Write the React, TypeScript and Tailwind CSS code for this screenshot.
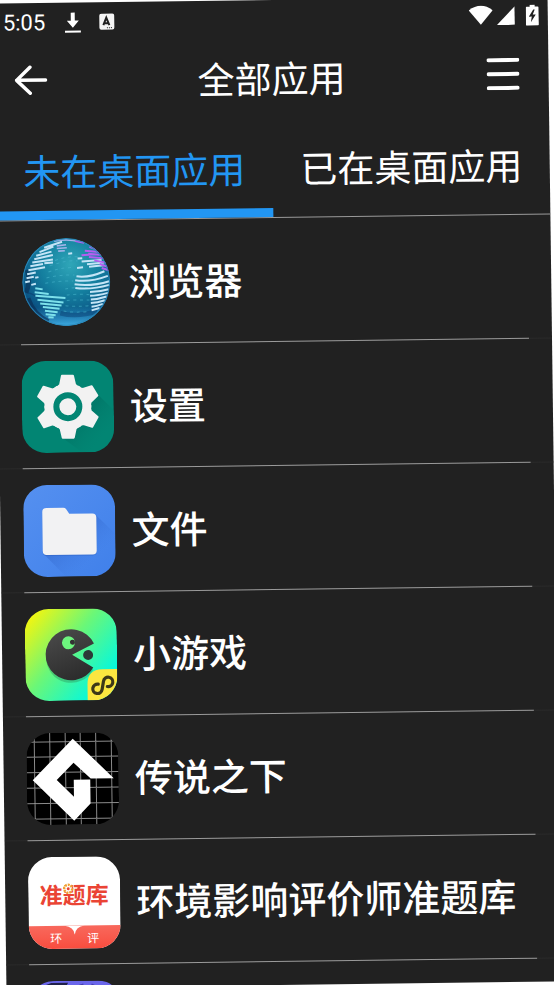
import React, { useState } from "react";
import clsx from "clsx";

const GlobeIcon: React.FC = () => (
  <svg viewBox="61 33 276 276" className="size-full" aria-hidden="true">
    <defs>
      <radialGradient id="globe-sea" cx="0.55" cy="0.3" r="0.75">
        <stop offset="0" stopColor="#2fa6b8" />
        <stop offset="0.45" stopColor="#147f9f" />
        <stop offset="0.8" stopColor="#0b5686" />
        <stop offset="1" stopColor="#0a3a66" />
      </radialGradient>
      <linearGradient id="globe-glow" x1="0" y1="0" x2="0" y2="1">
        <stop offset="0.78" stopColor="#2f9bd6" stopOpacity="0" />
        <stop offset="1" stopColor="#3fb0e8" />
      </linearGradient>
      <clipPath id="globe-clip">
        <circle cx="199" cy="169" r="132" />
      </clipPath>
    </defs>
    <g clipPath="url(#globe-clip)">
      <circle cx="199" cy="169" r="132" fill="url(#globe-sea)" />
      <circle cx="199" cy="169" r="132" fill="url(#globe-glow)" />
      <path d="M78 200q14-34 4-70M84 216q16 50 60 70" stroke="#0a2c52" strokeWidth="14" fill="none" opacity="0.6" />
      <path d="M84 200q34 6 60 60" stroke="#0d3f72" strokeWidth="4" fill="none" opacity="0.6" />
      <path d="M180 262q50 14 110-4" stroke="#0a3f74" strokeWidth="14" fill="none" opacity="0.5" />
      <g stroke="#48b4cc" strokeWidth="3" strokeDasharray="9 11" opacity="0.6" fill="none">
        <path d="M166 104q40-14 76-10M150 120q50-18 84-14M146 138q40-14 78-12M140 156q40-10 84-8M136 172q44-8 84-6M196 190q30-6 74-2M200 208q30-4 68 0M200 224q30-2 68 0M196 240q36 4 76 0M190 256q30 6 74 2" />
      </g>
      <g stroke="#c3e4f6" strokeWidth="6" fill="none">
        <path d="M134 65l54-17M120 78l42-16M110 89l46-12M104 99l56-12M98 109l62-8M92 120l38-6M134 112l26-2M86 132l50-8M82 144l26-5M80 156l22-4M76 168l14-3M106 155l10-2M94 176l14-3" />
        <path d="M230 152q36 6 84-14M226 164q46 7 98-12M224 176q50 8 104-8M226 187q46 7 102-8M270 200q26 0 56-8M270 211q22 0 54-8M272 222q22 0 48-8M272 233q20-1 42-8M274 244q14-1 34-8M274 255l24-7" />
        <path d="M232 127l18-2M268 124l44-4M234 99l14-1M246 108l60-4M262 116l52-4M206 84l12-1" />
      </g>
      <g stroke="#a3b4ea" strokeWidth="5" fill="none">
        <path d="M172 60l28-3M172 68l30-2M176 76l20-1M164 46q40-8 76 2" />
      </g>
      <g stroke="#7ce0ea" strokeWidth="6" fill="none">
        <path d="M106 186l22 4M104 198l42 6M106 209l90 8M112 221l78 9M120 232l64 7M128 243l50 6M134 254l38 5M136 265l30 3M144 274l16 1" />
      </g>
      <g stroke="#b45ef0" strokeWidth="6" fill="none">
        <path d="M228 46l26 6M246 89l30-2M256 76l44 4M266 85l42 4M268 95l50 5M284 105l38 8M300 116l28 10M306 128l24 8M270 64l20 8" />
      </g>
      <circle cx="199" cy="169" r="130" fill="none" stroke="#2a87b8" strokeWidth="4" opacity="0.8" />
    </g>
  </svg>
);

const SettingsIcon: React.FC = () => (
  <svg viewBox="0 0 92 92" className="size-full" aria-hidden="true">
    <defs>
      <linearGradient id="gear-shade" x1="0" y1="0" x2="1" y2="1">
        <stop offset="0.4" stopColor="#00695c" stopOpacity="0.4" />
        <stop offset="0.75" stopColor="#00796b" stopOpacity="0" />
      </linearGradient>
    </defs>
    <rect width="92" height="92" fill="#028573" />
    <path d="M77 35L92 50V92H60L40 77Z" fill="url(#gear-shade)" />
    <g fill="#f2f2f2" stroke="#f2f2f2" strokeWidth="2" strokeLinejoin="round">
      <circle cx="46" cy="46" r="22" />
      {[0, 60, 120, 180, 240, 300].map((angle) => (
        <path
          key={angle}
          d="M40.500 15H51.500L53.500 24Q55 26 58 27L46 46L34 27Q37 26 38.500 24Z"
          transform={`rotate(${angle} 46 46)`}
        />
      ))}
    </g>
    <circle cx="46" cy="46" r="14.500" fill="#028573" />
    <circle cx="46" cy="46" r="8.500" fill="#f2f2f2" />
  </svg>
);

const FilesIcon: React.FC = () => (
  <svg viewBox="0 0 92 92" className="size-full" aria-hidden="true">
    <defs>
      <linearGradient id="files-bg" x1="0" y1="0" x2="1" y2="1">
        <stop offset="0" stopColor="#5590f0" />
        <stop offset="1" stopColor="#4080ea" />
      </linearGradient>
      <linearGradient id="files-shade" x1="0" y1="0" x2="1" y2="1">
        <stop offset="0.3" stopColor="#2a5cc0" stopOpacity="0.5" />
        <stop offset="0.7" stopColor="#3a74dc" stopOpacity="0" />
      </linearGradient>
    </defs>
    <rect width="92" height="92" fill="url(#files-bg)" />
    <path d="M72 30L92 50V92H42L20 69Z" fill="url(#files-shade)" />
    <path d="M23 24H40Q42 24 43 25.500L46 30H69Q73 30 73 34V67Q73 71 69 71H23Q19 71 19 67V28Q19 24 23 24Z" fill="#2d62c4" opacity="0.5" />
    <path d="M23 23H40Q42 23 43 24.500L46 29H69Q73 29 73 33V66Q73 70 69 70H23Q19 70 19 66V27Q19 23 23 23Z" fill="#f2f2f3" />
  </svg>
);

const GamesIcon: React.FC = () => (
  <svg viewBox="0 0 92 92" className="size-full" aria-hidden="true">
    <defs>
      <linearGradient id="games-bg" x1="0" y1="0.1" x2="0.85" y2="0.8">
        <stop offset="0" stopColor="#fbf50a" />
        <stop offset="0.5" stopColor="#6bf777" />
        <stop offset="1" stopColor="#06f8dc" />
      </linearGradient>
      <linearGradient id="games-body" x1="0.2" y1="0" x2="0.6" y2="1">
        <stop offset="0" stopColor="#4a4a4a" />
        <stop offset="1" stopColor="#2c2c2c" />
      </linearGradient>
    </defs>
    <rect width="92" height="92" fill="url(#games-bg)" />
    <path d="M46 49L68 61A25 25 0 0 1 21 49Z" fill="#2f9a60" opacity="0.45" />
    <path d="M47 46L69 35A25.500 25.500 0 1 0 68 59Z" fill="url(#games-body)" />
    <circle cx="43.500" cy="34" r="6.500" fill="#6df57e" />
    <circle cx="47.500" cy="33.500" r="2.500" fill="#333" />
    <circle cx="63" cy="46.500" r="5" fill="#2c3a38" />
    <path d="M62 92V76Q62 61 77 61H92V92Z" fill="#fbe640" />
    <path
      d="M82 77.500A4.700 4.700 0 1 0 77.300 72.800V81.300A4.700 4.700 0 1 1 72.600 76.600"
      fill="none"
      stroke="#3d3818"
      strokeWidth="3.200"
      strokeLinecap="round"
      transform="rotate(10 77.3 77)"
    />
  </svg>
);

const GameMakerIcon: React.FC = () => (
  <svg viewBox="0 0 92 92" className="size-full" aria-hidden="true">
    <rect width="92" height="92" fill="#000" />
    <path
      d="M8 0V92M23.500 0V92M39 0V92M54 0V92M69.500 0V92M85 0V92M0 9H92M0 24H92M0 39.500H92M0 55H92M0 70.500H92M0 86H92"
      stroke="#8a8a8a"
      strokeWidth="1"
    />
    <path d="M46.500 6L87 46H64L47 30L30 47L47 64V47H63.500V71L47 88L6 47Z" fill="#fff" />
  </svg>
);

const ExamIcon: React.FC = () => (
  <div className="flex size-full flex-col bg-white">
    <div className="relative flex h-[69px] items-end justify-center pb-[14px]">
      <span className="text-[23px] leading-[36px] font-bold text-[#ea4434]">准题库</span>
      <svg viewBox="0 0 12 12" className="absolute top-[26px] left-[34px] size-3" aria-hidden="true">
        <circle cx="6" cy="6" r="4" fill="#fff" stroke="#f0a030" strokeWidth="2.500" strokeDasharray="2 1" />
        <circle cx="6" cy="6" r="1.500" fill="#ea4434" />
      </svg>
    </div>
    <div className="relative flex flex-1 justify-center gap-[25px] bg-linear-to-b from-[#f8685c] to-[#f84c3e] text-[12px] leading-[23px] text-white">
      <svg viewBox="0 0 20 9" className="absolute top-0 h-[9px] w-[20px]" aria-hidden="true">
        <path d="M0 0Q9 1 10 9Q11 1 20 0Z" fill="#fff" />
      </svg>
      <span>环</span>
      <span>评</span>
    </div>
  </div>
);

const PurpleIcon: React.FC = () => (
  <svg viewBox="0 0 92 92" className="size-full" aria-hidden="true">
    <rect width="92" height="92" fill="#6a66ea" />
    <path d="M14 6L22 3L37 3L32 12Z" fill="#bcd4ee" stroke="#20204a" strokeWidth="2" />
    <path d="M50 5L54 4M62 4L66 6" stroke="#4640b0" strokeWidth="2" />
  </svg>
);

interface AppEntry {
  id: string;
  name: string;
  icon: React.ReactNode;
  round?: boolean;
}

const apps: AppEntry[] = [
  { id: "browser", name: "浏览器", icon: <GlobeIcon />, round: true },
  { id: "settings", name: "设置", icon: <SettingsIcon /> },
  { id: "files", name: "文件", icon: <FilesIcon /> },
  { id: "games", name: "小游戏", icon: <GamesIcon /> },
  { id: "undertale", name: "传说之下", icon: <GameMakerIcon /> },
  { id: "exam", name: "环境影响评价师准题库", icon: <ExamIcon /> },
  { id: "next", name: "", icon: <PurpleIcon /> },
];

const tabs = ["未在桌面应用", "已在桌面应用"];

const StatusBar: React.FC = () => (
  <div className="flex h-9 shrink-0 items-center justify-between px-[9px]">
    <div className="flex items-center pt-[3px]">
      <span className="w-[62px] font-[Roboto] text-[22px] leading-8">5:05</span>
      <svg viewBox="0 0 16 22" className="mr-[18px] h-[22px] w-4" fill="currentColor" aria-hidden="true">
        <path d="M6 1H10V9H14L8 16L2 9H6ZM0 19H16V21H0Z" />
      </svg>
      <svg viewBox="0 0 16 17" className="h-[17px] w-4" aria-hidden="true">
        <rect x="0.500" y="0.500" width="15" height="16" rx="2" fill="#f5f5f5" />
        <path d="M4.500 12L7.500 4.500L10.500 12M6 10H9" fill="none" stroke="#212121" strokeWidth="2" />
        <path d="M8 14.500H14" stroke="#212121" strokeWidth="1" strokeDasharray="1 1" />
      </svg>
    </div>
    <div className="flex items-center" aria-hidden="true">
      <svg viewBox="0 0 24 20" className="mr-1 h-5 w-6" fill="currentColor">
        <path d="M0 5Q12-4 24 5L12 19.500Z" />
      </svg>
      <svg viewBox="0 0 18 19" className="mr-[11px] h-[19px] w-[18px]" fill="currentColor">
        <path d="M18 0.500V19H0Z" />
      </svg>
      <svg viewBox="0 0 13 21" className="h-[21px] w-[13px]">
        <path d="M4 0H9V2H12Q13 2 13 3V20Q13 21 12 21H1Q0 21 0 20V3Q0 2 1 2H4Z" fill="#fff" />
        <path d="M7.500 5L3 12H6L5 17.500L10 10H7L9 5Z" fill="#212121" />
      </svg>
    </div>
  </div>
);

export default function App() {
  const [activeTab, setActiveTab] = useState(0);

  return (
    <div className="h-screen overflow-hidden bg-white">
      <main
        lang="zh-CN"
        className="flex h-screen -rotate-[0.75deg] flex-col overflow-hidden bg-[#212121] font-['Noto_Sans_CJK_SC',sans-serif] text-white"
      >
        <StatusBar />

        <header className="grid h-[82px] shrink-0 grid-cols-[1fr_auto_1fr] items-center px-5">
          <button type="button" aria-label="返回" className="justify-self-start">
            <svg viewBox="0 0 33 30" className="h-[30px] w-[33px]" fill="none" stroke="currentColor" strokeWidth="3.500" strokeLinecap="round" strokeLinejoin="round" aria-hidden="true">
              <path d="M31 15H2M15.500 2L2 15L15.500 28" />
            </svg>
          </button>
          <h1 className="text-[37px] leading-[54px]">全部应用</h1>
          <button type="button" aria-label="菜单" className="mr-[9px] justify-self-end">
            <svg viewBox="0 0 33 32" className="h-8 w-[33px]" stroke="currentColor" strokeWidth="4" strokeLinecap="round" aria-hidden="true">
              <path d="M2 2H31M2 16H31M2 30H31" />
            </svg>
          </button>
        </header>

        <div role="tablist" className="grid shrink-0 grid-cols-2 border-b border-[#9a9a9a]">
          {tabs.map((tab, i) => (
            <button
              key={tab}
              type="button"
              role="tab"
              aria-selected={activeTab === i}
              onClick={() => setActiveTab(i)}
              className={clsx(
                "h-[99px] border-b-[9px] pt-[7px] text-[37px] leading-[54px]",
                activeTab === i ? "border-[#2296f3] text-[#2296f3]" : "border-transparent"
              )}
            >
              {tab}
            </button>
          ))}
        </div>

        <ul>
          {apps.map((app) => (
            <li key={app.id}>
              <button type="button" className="flex h-[123px] w-full items-center gap-4 px-[23px] text-left">
                <span
                  className={clsx(
                    "block size-[92px] shrink-0 overflow-hidden",
                    !app.round && "rounded-[24px]"
                  )}
                >
                  {app.icon}
                </span>
                <span className="pb-1 text-[38px] leading-[56px] font-medium whitespace-nowrap">{app.name}</span>
              </button>
              <div className="h-px bg-[#2b2b2b] px-[23px]">
                <div className="h-px bg-[#9a9a9a]" />
              </div>
            </li>
          ))}
        </ul>
      </main>
    </div>
  );
}
